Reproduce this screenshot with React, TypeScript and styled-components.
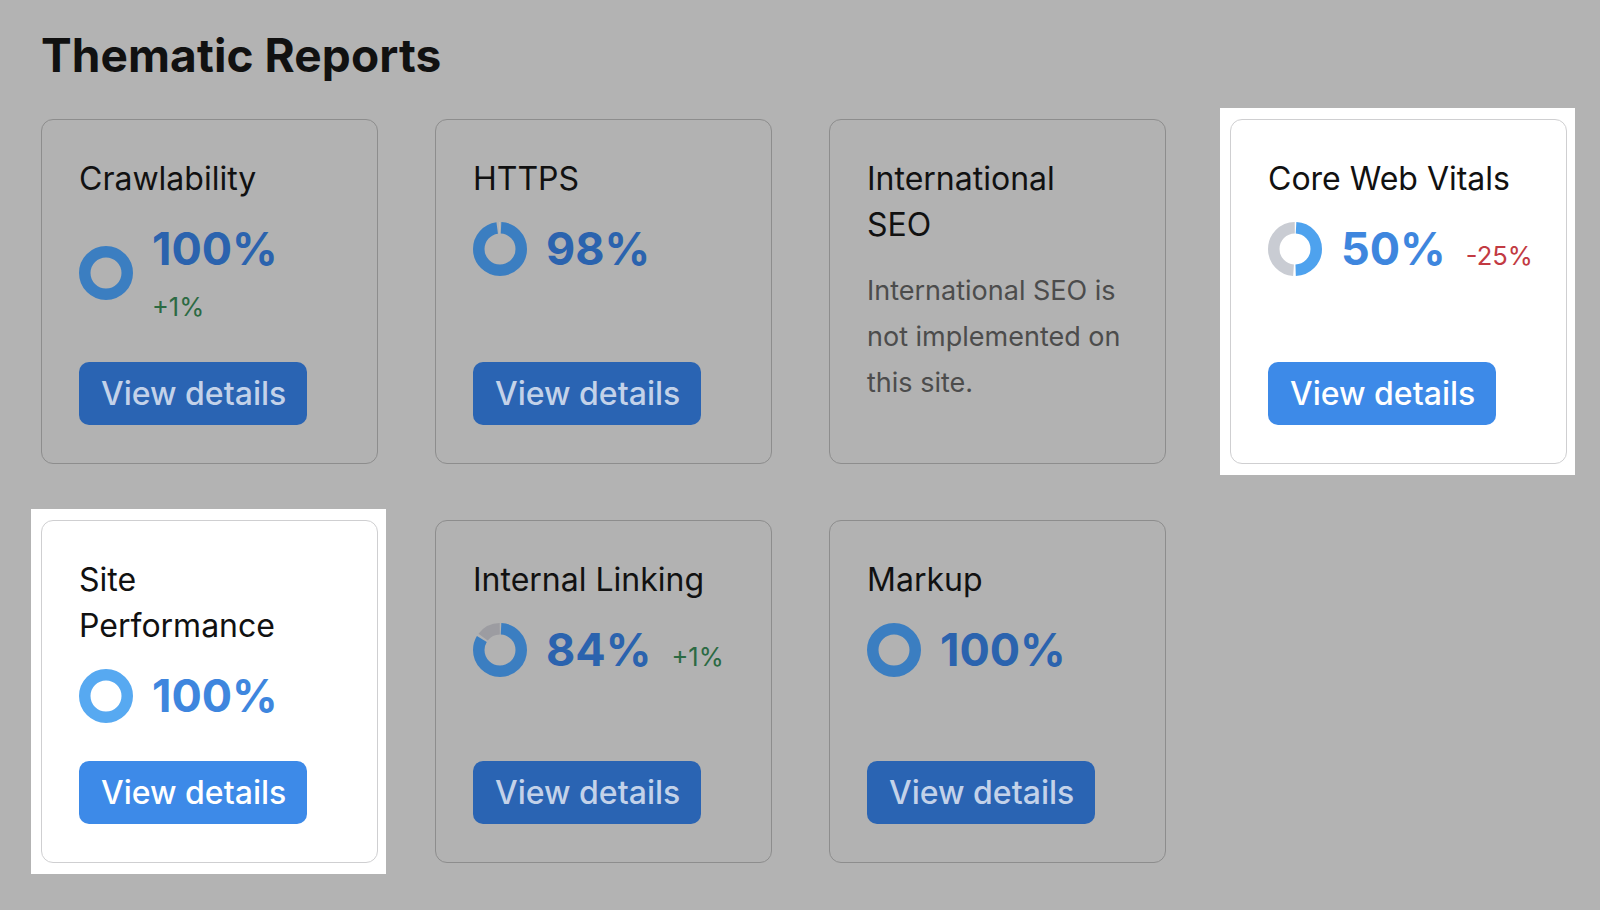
import React from "react";
import styled, { createGlobalStyle } from "styled-components";

const GlobalStyle = createGlobalStyle`
  html, body {
    margin: 0;
    padding: 0;
    background: #b3b3b3;
  }
  body {
    font-family: Inter, "Noto Sans", "Liberation Sans", sans-serif;
    -webkit-font-smoothing: antialiased;
  }
  * { box-sizing: border-box; }
`;

const Page = styled.main`
  min-height: 910px;
  padding: 28px 0 0 41px;
  background: #b3b3b3;
`;

const Heading = styled.h1`
  margin: 0 0 37px;
  font-size: 46px;
  line-height: 54px;
  font-weight: 700;
  color: #111111;
  letter-spacing: 0.1px;
`;

const Grid = styled.section`
  display: grid;
  grid-template-columns: repeat(4, 337px);
  column-gap: 57px;
  row-gap: 56px;
`;

const Spot = styled.div<{ $active?: boolean; $shift?: number }>`
  position: relative;
  display: flex;
  margin-left: ${(p) => p.$shift ?? 0}px;
  width: 337px;

  &::before {
    content: "";
    display: ${(p) => (p.$active ? "block" : "none")};
    position: absolute;
    top: -11px;
    left: -10px;
    right: -8px;
    bottom: -11px;
    background: #ffffff;
  }
`;

const Card = styled.article<{ $active?: boolean }>`
  position: relative;
  flex: 1;
  display: flex;
  flex-direction: column;
  padding: 36px 26px 38px 37px;
  border: 1.5px solid ${(p) => (p.$active ? "#cfcfd1" : "#8d8d8d")};
  border-radius: 12px;
  background: ${(p) => (p.$active ? "#ffffff" : "#b2b2b2")};
`;

const CardTitle = styled.h2`
  margin: 0 0 20px;
  font-size: 32px;
  line-height: 46px;
  font-weight: 400;
  color: #111111;
  white-space: pre-line;
`;

const Description = styled.p`
  margin: 0;
  font-size: 27px;
  line-height: 46px;
  color: #4c4c4c;
`;

const StatRow = styled.div`
  display: flex;
  align-items: center;
  gap: 19px;
  margin-bottom: 38px;
`;

const StatText = styled.div<{ $stacked?: boolean }>`
  display: flex;
  flex-direction: ${(p) => (p.$stacked ? "column" : "row")};
  align-items: ${(p) => (p.$stacked ? "flex-start" : "baseline")};
  gap: ${(p) => (p.$stacked ? "14px" : "20px")};
`;

const Percent = styled.span<{ $active?: boolean }>`
  font-size: 45px;
  line-height: 54px;
  font-weight: 700;
  color: ${(p) => (p.$active ? "#3e86de" : "#2b63ae")};
`;

const Delta = styled.span<{ $tone: "up" | "down" }>`
  font-size: 25.5px;
  line-height: 34px;
  font-weight: 400;
  color: ${(p) => (p.$tone === "up" ? "#2c6a43" : "#c23a42")};
`;

const Button = styled.button<{ $active?: boolean }>`
  align-self: flex-start;
  margin-top: auto;
  height: 63px;
  padding: 0 21px 0 22px;
  border: none;
  border-radius: 10px;
  font-family: inherit;
  font-size: 32px;
  font-weight: 500;
  color: ${(p) => (p.$active ? "#ffffff" : "#c3d2e9")};
  background: ${(p) => (p.$active ? "#3d8ae8" : "#2a64b3")};
  cursor: pointer;
`;

type Seg = { frac: number; color: string };

const Donut: React.FC<{ segments: Seg[] }> = ({ segments }) => {
  const size = 54;
  const stroke = 11.5;
  const r = (size - stroke) / 2;
  const c = 2 * Math.PI * r;
  const gap = segments.length > 1 ? 2.2 : 0;
  let start = 0;
  return (
    <svg width={size} height={size} viewBox={`0 0 ${size} ${size}`} style={{ flex: "none" }}>
      {segments.map((s, i) => {
        const len = Math.max(s.frac * c - gap, 0);
        const el = (
          <circle
            key={i}
            cx={size / 2}
            cy={size / 2}
            r={r}
            fill="none"
            stroke={s.color}
            strokeWidth={stroke}
            strokeDasharray={`${len} ${c}`}
            strokeDashoffset={-(start * c + gap / 2)}
            transform={`rotate(-90 ${size / 2} ${size / 2})`}
          />
        );
        start += s.frac;
        return el;
      })}
    </svg>
  );
};

type Report = {
  title: string;
  value?: number;
  delta?: { text: string; tone: "up" | "down" };
  stacked?: boolean;
  description?: string;
  active?: boolean;
  shift?: number;
  blue?: string;
  track?: string;
};

const DIM_BLUE = "#3b7ec1";
const DIM_TRACK = "#9c9ca1";

const reports: Report[] = [
  { title: "Crawlability", value: 100, delta: { text: "+1%", tone: "up" }, stacked: true },
  { title: "HTTPS", value: 98 },
  {
    title: "International\nSEO",
    description: "International SEO is not implemented on this site.",
  },
  {
    title: "Core Web Vitals",
    value: 50,
    delta: { text: "-25%", tone: "down" },
    active: true,
    shift: 7,
    blue: "#4ea2ee",
    track: "#c9ccd3",
  },
  { title: "Site\nPerformance", value: 100, active: true, blue: "#57a9f1", track: "#c9ccd3" },
  { title: "Internal Linking", value: 84, delta: { text: "+1%", tone: "up" } },
  { title: "Markup", value: 100 },
];

const ReportCard: React.FC<{ r: Report }> = ({ r }) => {
  const blue = r.blue ?? DIM_BLUE;
  const track = r.track ?? (r.value === 98 ? "#c4c4c4" : DIM_TRACK);
  const segs: Seg[] =
    r.value === undefined
      ? []
      : r.value >= 100
      ? [{ frac: 1, color: blue }]
      : [
          { frac: r.value / 100, color: blue },
          { frac: 1 - r.value / 100, color: track },
        ];
  return (
    <Spot $active={r.active} $shift={r.shift}>
      <Card $active={r.active}>
        <CardTitle>{r.title}</CardTitle>
        {r.description ? (
          <Description>{r.description}</Description>
        ) : (
          <>
            <StatRow>
              <Donut segments={segs} />
              <StatText $stacked={r.stacked}>
                <Percent $active={r.active}>{r.value}%</Percent>
                {r.delta && <Delta $tone={r.delta.tone}>{r.delta.text}</Delta>}
              </StatText>
            </StatRow>
            <Button $active={r.active}>View details</Button>
          </>
        )}
      </Card>
    </Spot>
  );
};

export default function App() {
  return (
    <>
      <GlobalStyle />
      <Page>
        <Heading>Thematic Reports</Heading>
        <Grid>
          {reports.map((r) => (
            <ReportCard key={r.title} r={r} />
          ))}
        </Grid>
      </Page>
    </>
  );
}
